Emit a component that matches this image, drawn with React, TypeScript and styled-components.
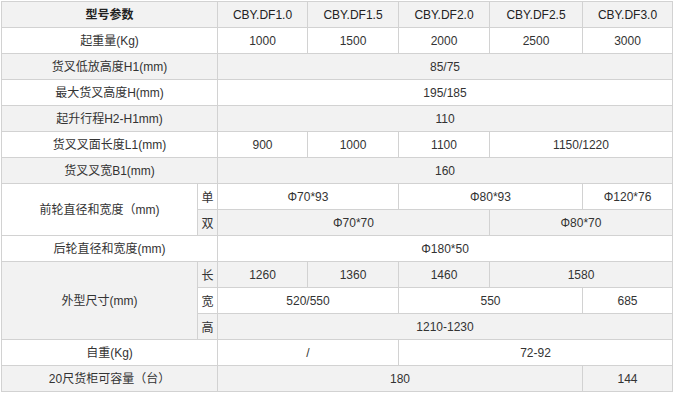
import styled, { createGlobalStyle } from 'styled-components';

const GlobalStyle = createGlobalStyle`
  html, body {
    margin: 0;
    padding: 0;
    background: #fff;
  }
  body {
    font-family: 'Liberation Sans', Arial, 'Noto Sans CJK SC', sans-serif;
    font-size: 12px;
    color: #333;
  }
`;

type Cell = { text: string; span?: number };

// each spec row: label, optional row-span label, values
const models = ['CBY.DF1.0', 'CBY.DF1.5', 'CBY.DF2.0', 'CBY.DF2.5', 'CBY.DF3.0'];

function App() {
  return (
    <>
      <GlobalStyle />
      <Wrap>
        <Table>
          <colgroup>
            <col style={{ width: 196 }} />
            <col style={{ width: 20 }} />
            <col style={{ width: 90 }} />
            <col style={{ width: 91 }} />
            <col style={{ width: 91 }} />
            <col style={{ width: 93 }} />
            <col style={{ width: 90 }} />
          </colgroup>
          <tbody>
            <Row>
              <Head colSpan={2} $strong>型号参数</Head>
              {models.map(m => (
                <Head key={m}>{m}</Head>
              ))}
            </Row>
            <Row>
              <Td colSpan={2}>起重量(Kg)</Td>
              {['1000', '1500', '2000', '2500', '3000'].map(v => (
                <Td key={v}>{v}</Td>
              ))}
            </Row>
            <Row>
              <Td colSpan={2}>货叉低放高度H1(mm)</Td>
              <Td colSpan={5}>85/75</Td>
            </Row>
            <Row>
              <Td colSpan={2}>最大货叉高度H(mm)</Td>
              <Td colSpan={5}>195/185</Td>
            </Row>
            <Row>
              <Td colSpan={2}>起升行程H2-H1mm)</Td>
              <Td colSpan={5}>110</Td>
            </Row>
            <Row>
              <Td colSpan={2}>货叉叉面长度L1(mm)</Td>
              <Values cells={[{ text: '900' }, { text: '1000' }, { text: '1100' }, { text: '1150/1220', span: 2 }]} />
            </Row>
            <Row>
              <Td colSpan={2}>货叉叉宽B1(mm)</Td>
              <Td colSpan={5}>160</Td>
            </Row>
            <Row>
              <Td rowSpan={2}>前轮直径和宽度（mm)</Td>
              <Sub>单</Sub>
              <Values cells={[{ text: 'Φ70*93', span: 2 }, { text: 'Φ80*93', span: 2 }, { text: 'Φ120*76' }]} />
            </Row>
            <Row>
              <Sub>双</Sub>
              <Values cells={[{ text: 'Φ70*70', span: 3 }, { text: 'Φ80*70', span: 2 }]} />
            </Row>
            <Row>
              <Td colSpan={2}>后轮直径和宽度(mm)</Td>
              <Td colSpan={5}>Φ180*50</Td>
            </Row>
            <Row>
              <Td rowSpan={3}>外型尺寸(mm)</Td>
              <Sub>长</Sub>
              <Values cells={[{ text: '1260' }, { text: '1360' }, { text: '1460' }, { text: '1580', span: 2 }]} />
            </Row>
            <Row>
              <Sub>宽</Sub>
              <Values cells={[{ text: '520/550', span: 2 }, { text: '550', span: 2 }, { text: '685' }]} />
            </Row>
            <Row>
              <Sub>高</Sub>
              <Td colSpan={5}>1210-1230</Td>
            </Row>
            <Row>
              <Td colSpan={2}>自重(Kg)</Td>
              <Values cells={[{ text: '/', span: 2 }, { text: '72-92', span: 3 }]} />
            </Row>
            <Row>
              <Td colSpan={2}>20尺货柜可容量（台）</Td>
              <Values cells={[{ text: '180', span: 4 }, { text: '144' }]} />
            </Row>
          </tbody>
        </Table>
      </Wrap>
    </>
  );
}

function Values({ cells }: { cells: Cell[] }) {
  return (
    <>
      {cells.map((c, i) => (
        <Td key={i} colSpan={c.span}>
          {c.text}
        </Td>
      ))}
    </>
  );
}

export default App;

const Wrap = styled.div`
  padding: 1px 0 0 1px;
`;

const Table = styled.table`
  width: 672px;
  table-layout: fixed;
  border-collapse: collapse;
`;

const Row = styled.tr`
  height: 26px;
  background: #fff;
  &:nth-child(odd) {
    background: #f2f2f2;
  }
`;

const Td = styled.td`
  border: 1px solid #d2d2d2;
  padding: 0;
  text-align: center;
  vertical-align: middle;
  line-height: 16px;
  white-space: nowrap;
`;

const Sub = styled(Td)`
  font-family: 'Noto Sans CJK SC', sans-serif;
`;

const Head = styled.th<{ $strong?: boolean }>`
  border: 1px solid #d2d2d2;
  padding: 0;
  text-align: center;
  vertical-align: middle;
  line-height: 16px;
  color: #222;
  font-weight: ${p => (p.$strong ? 'bold' : 'normal')};
  white-space: nowrap;
`;
